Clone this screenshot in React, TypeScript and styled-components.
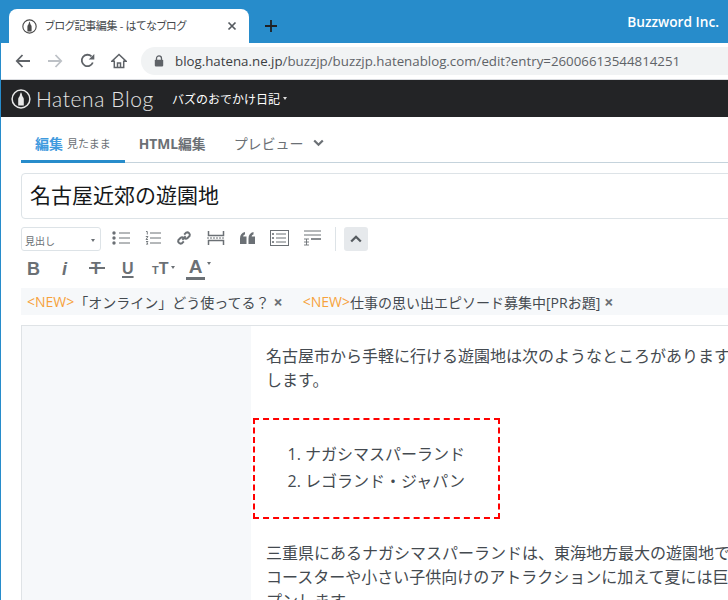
import React, { FC } from 'react';
import styled, { createGlobalStyle } from 'styled-components';

const GlobalStyle = createGlobalStyle`
    html, body {
        margin: 0;
        padding: 0;
        background: #fff;
    }
    body {
        font-family: "Open Sans", "Noto Sans CJK JP", sans-serif;
        overflow: hidden;
    }
    * {
        box-sizing: border-box;
    }
`;

const ICON = '#6b7075';

const Glyph: FC<{ w: number; h: number; children: React.ReactNode; color?: string }> = ({ w, h, children, color }) => (
    <svg width={w} height={h} viewBox={`0 0 ${w} ${h}`} fill="none" stroke={color || ICON} style={{ display: 'block' }}>
        {children}
    </svg>
);

const HatenaMark: FC<{ size: number; ring: string; fill: string }> = ({ size, ring, fill }) => (
    <svg width={size} height={size} viewBox="0 0 20 20" style={{ display: 'block' }}>
        <circle cx="10" cy="10" r="8.9" fill="none" stroke={ring} strokeWidth="1.5" />
        <path d="M10 3.2c.9 1.4 1 2.6 1.3 3.7.6 1 1.5 1.8 1.5 3.3v6.4H7.200v-6.400c0-1.500.9-2.300 1.500-3.300C9 5.800 9.100 4.600 10 3.200z" fill={fill} />
    </svg>
);

export default function App() {
    return (
        <Page>
            <GlobalStyle />
            <TabStrip>
                <Tab>
                    <HatenaMark size={15} ring="#4a4a4a" fill="#4a4a4a" />
                    <TabTitle>ブログ記事編集 - はてなブログ</TabTitle>
                    <svg width="10" height="10" viewBox="0 0 10 10" style={{ display: 'block' }}>
                        <path d="M1.500 1.500l7 7M8.500 1.500l-7 7" stroke="#555a5f" strokeWidth="1.700" />
                    </svg>
                </Tab>
                <NewTab>
                    <svg width="12" height="12" viewBox="0 0 12 12" style={{ display: 'block' }}>
                        <path d="M6 0v12M0 6h12" stroke="#202124" strokeWidth="1.800" />
                    </svg>
                </NewTab>
                <Owner>Buzzword Inc.</Owner>
            </TabStrip>

            <AddressRow>
                <NavIcon>
                    <svg width="16" height="14" viewBox="0 0 16 14">
                        <path d="M15 7H2M7.500 1L1.800 7l5.700 6" fill="none" stroke="#5f6368" strokeWidth="1.800" />
                    </svg>
                </NavIcon>
                <NavIcon>
                    <svg width="16" height="14" viewBox="0 0 16 14">
                        <path d="M1 7h13M8.500 1l5.700 6-5.700 6" fill="none" stroke="#bdc1c6" strokeWidth="1.800" />
                    </svg>
                </NavIcon>
                <NavIcon>
                    <svg width="15" height="15" viewBox="0 0 15 15">
                        <path d="M12.800 9.500A5.700 5.700 0 1 1 11.500 3.400" fill="none" stroke="#5f6368" strokeWidth="1.800" />
                        <path d="M14.300 1v5.600H8.700z" fill="#5f6368" />
                    </svg>
                </NavIcon>
                <NavIcon>
                    <svg width="16" height="16" viewBox="0 0 16 16">
                        <path d="M8 1.500L1 8.200h2.300V14.500h9.400V8.200H15zM6.500 14.500V10h3v4.500" fill="none" stroke="#5f6368" strokeWidth="1.500" />
                    </svg>
                </NavIcon>
                <UrlPill>
                    <svg width="10" height="12" viewBox="0 0 10 12" style={{ display: 'block' }}>
                        <path d="M2.500 5V3.400a2.500 2.500 0 0 1 5 0V5" fill="none" stroke="#5f6368" strokeWidth="1.300" />
                        <rect x="0.800" y="4.800" width="8.400" height="6.600" rx="0.800" fill="#5f6368" />
                    </svg>
                    <UrlText>
                        <UrlHost>blog.hatena.ne.jp</UrlHost>/buzzjp/buzzjp.hatenablog.com/edit?entry=26006613544814251
                    </UrlText>
                </UrlPill>
            </AddressRow>

            <Body>
                <BlogHeader>
                    <HatenaMark size={20} ring="#e8e8e8" fill="#e8e8e8" />
                    <Brand>Hatena Blog</Brand>
                    <BlogName>バズのおでかけ日記</BlogName>
                    <HeaderCaret />
                </BlogHeader>

                <Main>
                    <Tabs>
                        <EditorTab $active>
                            編集<TabNote>見たまま</TabNote>
                        </EditorTab>
                        <EditorTab $bold>HTML編集</EditorTab>
                        <EditorTab>
                            プレビュー
                            <svg width="11" height="8" viewBox="0 0 11 8" style={{ display: 'block' }}>
                                <path d="M1.200 1.500l4.300 4.300 4.300-4.300" fill="none" stroke="#6b7075" strokeWidth="2.200" />
                            </svg>
                        </EditorTab>
                    </Tabs>

                    <TitleInput>名古屋近郊の遊園地</TitleInput>

                    <ToolRow>
                        <Heading>
                            見出し
                            <SmallCaret />
                        </Heading>
                        <ToolIcons>
                            <Glyph w={18} h={14}>
                                <path d="M7 2h11M7 7h11M7 12h11" />
                                <circle cx="2" cy="2" r="1.700" fill={ICON} stroke="none" />
                                <circle cx="2" cy="7" r="1.700" fill={ICON} stroke="none" />
                                <circle cx="2" cy="12" r="1.700" fill={ICON} stroke="none" />
                            </Glyph>
                            <Glyph w={16} h={14}>
                                <path d="M5 2h11M5 7h11M5 12h11" />
                                <path d="M1 .5h1.300v3M.8 5.500h2.200L1 8.500h2M1 10.500h2l-1 1.300 1 1.300H1" strokeWidth="0.900" />
                            </Glyph>
                            <Glyph w={16} h={16}>
                                <path d="M6.300 9.700l3.400-3.400" strokeWidth="2" />
                                <path d="M8.200 4.600l2-2a2.600 2.600 0 0 1 3.400 3.400l-2 2a2.600 2.600 0 0 1-3.400 0M7.800 11.400l-2 2A2.600 2.600 0 0 1 2.400 10l2-2a2.600 2.600 0 0 1 3.400 0" strokeWidth="2" />
                            </Glyph>
                            <Glyph w={18} h={14}>
                                <path d="M1.500 0v4.500h15V0M1.500 14V9.500h15V14" strokeWidth="1.500" />
                                <path d="M0 7h18" strokeDasharray="2 1" />
                            </Glyph>
                            <Glyph w={15} h={12}>
                                <path d="M0 6.500C0 3 1.800 .8 5 0v2.600C3.800 3 3.300 3.700 3.200 4.600H6.500V12H0zM8.500 6.500C8.500 3 10.300 .8 13.500 0v2.600c-1.200.4-1.700 1.100-1.800 2H15V12H8.500z" fill={ICON} stroke="none" />
                            </Glyph>
                            <Glyph w={19} h={16}>
                                <rect x="0.500" y="0.500" width="18" height="15" />
                                <path d="M6 4h10M6 8h10M6 12h10" />
                                <circle cx="3" cy="4" r="1.100" fill={ICON} stroke="none" />
                                <circle cx="3" cy="8" r="1.100" fill={ICON} stroke="none" />
                                <circle cx="3" cy="12" r="1.100" fill={ICON} stroke="none" />
                            </Glyph>
                            <Glyph w={17} h={16}>
                                <path d="M0 1h17M0 5h17" />
                                <path d="M7 9h10" strokeWidth="1.600" />
                                <path d="M0 9h5M2.500 9v6M0 12h5M0 15h5" strokeWidth="0.900" />
                            </Glyph>
                        </ToolIcons>
                        <ToolDivider />
                        <CollapseButton>
                            <svg width="12" height="8" viewBox="0 0 12 8" style={{ display: 'block' }}>
                                <path d="M1.200 6.500L6 1.800l4.800 4.700" fill="none" stroke="#565b60" strokeWidth="2.300" />
                            </svg>
                        </CollapseButton>
                    </ToolRow>

                    <FormatRow>
                        <FormatBold>B</FormatBold>
                        <FormatItalic>i</FormatItalic>
                        <FormatStrike>T</FormatStrike>
                        <FormatUnderline>U</FormatUnderline>
                        <FontSizeIcon>
                            <small>T</small>T
                            <SmallCaret />
                        </FontSizeIcon>
                        <FontColorIcon>
                            <ColorLetter>A</ColorLetter>
                            <SmallCaret />
                        </FontColorIcon>
                    </FormatRow>

                    <Notice>
                        <NoticeItem>
                            <NewLabel>&lt;NEW&gt;</NewLabel>「オンライン」どう使ってる？<Dismiss>×</Dismiss>
                        </NoticeItem>
                        <NoticeItem>
                            <NewLabel>&lt;NEW&gt;</NewLabel>仕事の思い出エピソード募集中[PRお題]<Dismiss>×</Dismiss>
                        </NoticeItem>
                    </Notice>

                    <Editor>
                        <Sidebar />
                        <Content>
                            <Paragraph>
                                名古屋市から手軽に行ける遊園地は次のようなところがあります。
                                <br />
                                します。
                            </Paragraph>
                            <List>
                                <li>ナガシマスパーランド</li>
                                <li>レゴランド・ジャパン</li>
                            </List>
                            <Paragraph>
                                三重県にあるナガシマスパーランドは、東海地方最大の遊園地です。
                                <br />
                                コースターや小さい子供向けのアトラクションに加えて夏には巨大プール
                                <br />
                                プンします。
                            </Paragraph>
                            <Highlight />
                        </Content>
                    </Editor>
                </Main>
            </Body>
        </Page>
    );
}

const Page = styled.div`
    width: 728px;
    height: 600px;
    overflow: hidden;
    display: flex;
    flex-direction: column;
    border-left: 1px solid #278ccb;
`;

const TabStrip = styled.div`
    height: 43px;
    flex-shrink: 0;
    margin-left: -1px;
    padding: 9px 12px 0 9px;
    background: #278ccb;
    display: flex;
    align-items: stretch;
`;

const Tab = styled.div`
    width: 240px;
    padding: 0 12px 0 13px;
    background: #fff;
    border-radius: 8px 8px 0 0;
    display: flex;
    align-items: center;
`;

const TabTitle = styled.span`
    flex: 1;
    margin-left: 8px;
    margin-top: -2px;
    font-size: 11px;
    letter-spacing: -0.300px;
    font-feature-settings: "palt";
    color: #45494d;
    white-space: nowrap;
`;

const NewTab = styled.div`
    width: 44px;
    display: flex;
    align-items: center;
    justify-content: center;
    margin-left: 0;
`;

const Owner = styled.div`
    margin-left: auto;
    margin-top: 3px;
    margin-right: -3px;
    font-size: 13.700px;
    font-weight: 600;
    color: #fff;
`;

const AddressRow = styled.div`
    height: 37px;
    flex-shrink: 0;
    padding: 4px 0 5px 6px;
    display: flex;
    align-items: center;
    background: #fff;
    border-bottom: 1px solid #dadce0;
`;

const NavIcon = styled.div`
    width: 32px;
    display: flex;
    align-items: center;
    justify-content: center;
`;

const UrlPill = styled.div`
    flex: 1;
    height: 28px;
    margin-left: 6px;
    padding-left: 13px;
    border-radius: 14px 0 0 14px;
    background: #f1f3f4;
    display: flex;
    align-items: center;
    overflow: hidden;
`;

const UrlText = styled.span`
    margin-left: 11px;
    font-size: 13.300px;
    color: #5f6368;
    white-space: nowrap;
`;

const UrlHost = styled.span`
    color: #3c4043;
`;

const Body = styled.div`
    flex: 1;
    min-height: 0;
    display: flex;
    flex-direction: column;
`;

const BlogHeader = styled.div`
    height: 37px;
    flex-shrink: 0;
    padding-left: 10px;
    background: #232426;
    display: flex;
    align-items: center;
`;

const Brand = styled.span`
    width: 136px;
    margin-left: 5px;
    font-family: "Lato", sans-serif;
    font-size: 21px;
    font-weight: 300;
    color: #e4e4e4;
    letter-spacing: 0.600px;
    white-space: nowrap;
`;

const BlogName = styled.span`
    font-size: 12px;
    color: #fff;
    white-space: nowrap;
`;

const HeaderCaret = styled.span`
    margin-left: 3px;
    border-top: 3px solid #ddd;
    border-left: 2.500px solid transparent;
    border-right: 2.500px solid transparent;
`;

const Main = styled.div`
    flex: 1;
    min-height: 0;
    padding-left: 20px;
    display: flex;
    flex-direction: column;
`;

const Tabs = styled.div`
    height: 46px;
    flex-shrink: 0;
    margin-top: 0;
    display: flex;
    align-items: stretch;
    border-bottom: 1px solid #c5d3dc;
`;

const EditorTab = styled.div<{ $active?: boolean; $bold?: boolean }>`
    padding: 8px 14px 0;
    margin-bottom: -1px;
    display: flex;
    align-items: center;
    gap: 9px;
    font-size: ${(props) => (props.$bold ? '13.800px' : '14px')};
    font-weight: ${(props) => (props.$active || props.$bold ? 700 : 400)};
    color: ${(props) => (props.$active ? '#3f9ade' : '#6b7075')};
    border-bottom: 3px solid ${(props) => (props.$active ? '#278ccb' : 'transparent')};
`;

const TabNote = styled.span`
    margin-left: -5px;
    font-size: 11px;
    font-weight: 400;
    color: #6b7075;
`;

const TitleInput = styled.div`
    height: 46px;
    flex-shrink: 0;
    margin-top: 10px;
    margin-right: -10px;
    padding: 0 0 4px 8px;
    display: flex;
    align-items: center;
    font-size: 21px;
    color: #16181a;
    border: 1px solid #dde3e7;
    border-radius: 4px;
`;

const ToolRow = styled.div`
    height: 24px;
    flex-shrink: 0;
    margin-top: 8px;
    display: flex;
    align-items: center;
`;

const Heading = styled.div`
    width: 80px;
    height: 24px;
    padding: 2px 5px 0 3px;
    display: flex;
    align-items: center;
    justify-content: space-between;
    font-size: 10px;
    color: #6b7075;
    border: 1px solid #dde3e7;
    border-radius: 3px;
`;

const SmallCaret = styled.span`
    display: inline-block;
    border-top: 3px solid #6b7075;
    border-left: 2px solid transparent;
    border-right: 2px solid transparent;
`;

const ToolIcons = styled.div`
    margin-left: 11px;
    margin-top: -3px;
    display: flex;
    align-items: center;
    gap: 15px;
`;

const ToolDivider = styled.span`
    width: 1px;
    height: 24px;
    margin-left: 14px;
    background: #dde3e7;
`;

const CollapseButton = styled.div`
    width: 24px;
    height: 24px;
    margin-left: 8px;
    border-radius: 3px;
    background: #e6e9ec;
    display: flex;
    align-items: center;
    justify-content: center;
`;

const FormatRow = styled.div`
    height: 23px;
    flex-shrink: 0;
    margin-top: 6px;
    padding-left: 6px;
    display: flex;
    align-items: center;
    color: #6b7075;
    font-family: "Liberation Sans", sans-serif;
    font-size: 18px;
    line-height: 1;
`;

const FormatBold = styled.span`
    width: 35px;
    font-weight: 700;
`;

const FormatItalic = styled.span`
    width: 27px;
    font-weight: 700;
    font-style: italic;
`;

const FormatStrike = styled.span`
    width: 33px;
    padding-left: 2px;
    font-weight: 700;
    font-size: 16px;
    position: relative;

    &::after {
        content: '';
        position: absolute;
        left: 0;
        width: 16px;
        top: 6px;
        height: 2px;
        background: #6b7075;
    }
`;

const FormatUnderline = styled.span`
    width: 30px;
    font-weight: 700;
    font-size: 16px;
    text-decoration: underline;
    text-decoration-thickness: 2px;
    text-underline-offset: 2px;
`;

const FontSizeIcon = styled.span`
    width: 34px;
    font-weight: 700;
    font-size: 16px;
    display: flex;
    align-items: baseline;

    small {
        font-size: 11px;
    }

    ${SmallCaret} {
        margin-left: 2px;
        align-self: flex-start;
        margin-top: 5px;
    }
`;

const FontColorIcon = styled.span`
    font-weight: 700;
    display: flex;

    ${SmallCaret} {
        margin-left: 2px;
        margin-top: 5px;
        align-self: flex-start;
    }
`;

const ColorLetter = styled.span`
    width: 19px;
    font-size: 19px;
    text-align: center;
    border-bottom: 3px solid #6b7075;
    padding-bottom: 1px;
`;

const Notice = styled.div`
    height: 27px;
    flex-shrink: 0;
    margin-top: 8px;
    margin-right: -10px;
    padding-left: 6px;
    background: #f6f8fa;
    display: flex;
    align-items: center;
    gap: 20px;
    font-size: 14px;
    color: #444a50;
    white-space: nowrap;
`;

const NoticeItem = styled.span`
    display: inline-flex;
    align-items: center;
`;

const NewLabel = styled.span`
    font-size: 14px;
    color: #f7a23c;
`;

const Dismiss = styled.span`
    margin-left: 4px;
    font-weight: 700;
    font-size: 16px;
    line-height: 1;
    color: #6b7075;
`;

const Editor = styled.div`
    flex: 1;
    min-height: 0;
    margin-top: 10px;
    margin-right: -10px;
    display: flex;
    border-top: 1px solid #dfe3e6;
    border-left: 1px solid #dfe3e6;
`;

const Sidebar = styled.div`
    width: 229px;
    flex-shrink: 0;
    background: #f6f8fa;
`;

const Content = styled.div`
    flex: 1;
    min-width: 0;
    position: relative;
    padding: 18px 0 0 15px;
    font-size: 16px;
    line-height: 24px;
    color: #444a50;
    white-space: nowrap;
`;

const Paragraph = styled.p`
    margin: 0;
`;

const List = styled.ol`
    margin: 49px 0 46px;
    padding-left: 39px;
    line-height: 27px;
`;

const Highlight = styled.div`
    position: absolute;
    left: 2px;
    top: 92px;
    width: 247px;
    height: 101px;
    border: 2px dashed #f00;
`;
